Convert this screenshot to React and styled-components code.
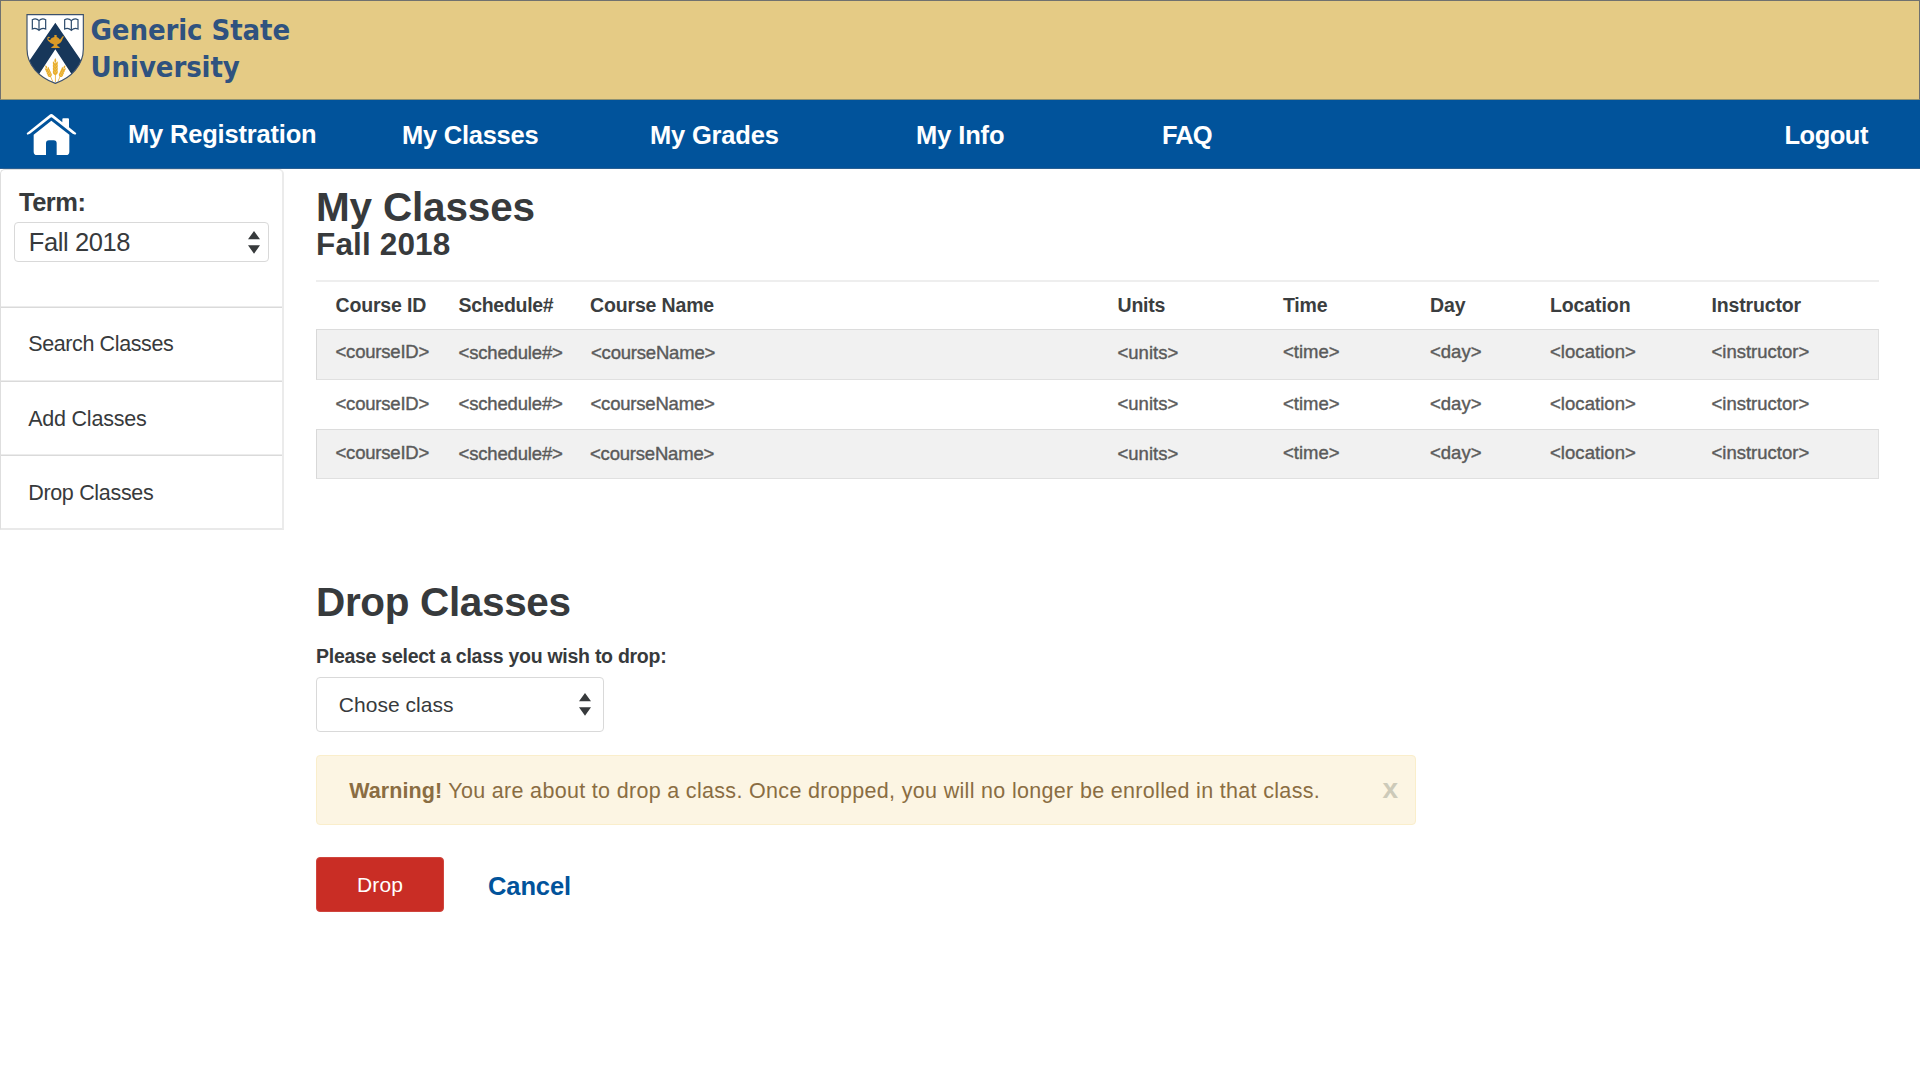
import React from 'react';
import styled, { createGlobalStyle, css } from 'styled-components';

const ink = '#373a3c';
const blue = '#01539b';

const GlobalStyle = createGlobalStyle`
  * { box-sizing: border-box; }
  body {
    margin: 0;
    background: #fff;
    color: ${ink};
    font-family: "Liberation Sans", Arial, sans-serif;
  }
  h1, h2, p { margin: 0; }
`;

const tracking = css`
  letter-spacing: ${(p) => p.$track || 0}px;
`;

/* ---------- header ---------- */

const Header = styled.header`
  height: 100px;
  padding: 12px 0 0 25px;
  display: flex;
  background: #e5cb85;
  border: 1px solid #70716f;
  border-bottom-color: #8f9272;
`;

const Crest = styled.svg`
  display: block;
  width: 60px;
  height: 72px;
  margin-right: 4.5px;
`;

const SchoolName = styled.div`
  margin-top: -1px;
  color: #2f527f;
  font: bold 29px/36.5px "DejaVu Sans Condensed", "DejaVu Sans", sans-serif;
  letter-spacing: -0.1px;
  white-space: pre-line;
`;

const Nav = styled.nav`
  height: 69px;
  display: grid;
  grid-template-columns: 128px 274px 248px 266px 246px 622.5px 1fr;
  background: ${blue};
  border-bottom: 1px solid #2a5f92;
`;

const HomeLink = styled.a`
  padding: 13px 0 0 26px;
`;

const HomeIcon = styled.svg`
  display: block;
  width: 51px;
  height: 44px;
`;

const NavLink = styled.a`
  padding-top: ${(p) => (p.$raised ? 0 : 1)}px;
  color: #fff;
  font-size: 25.5px;
  font-weight: bold;
  line-height: 68px;
  white-space: nowrap;
  ${tracking}
`;

/* ---------- sidebar ---------- */

const Body = styled.div`
  display: flex;
  align-items: flex-start;
`;

const Sidebar = styled.aside`
  width: 284px;
  border: 1px solid #dedede;
  border-right: 2px solid #ebebeb;
  border-bottom: 2px solid #e9e9e9;
  border-radius: 5px 5px 0 0;
`;

const TermBox = styled.div`
  height: 138px;
  padding: 17px 13px 0;
  border-bottom: 1px solid #dadada;
  box-shadow: inset 0 -1px #ececec;
`;

const TermLabel = styled.div`
  padding-left: 5px;
  height: 35px;
  font-size: 25.5px;
  font-weight: bold;
  line-height: 30px;
  ${tracking}
`;

const SideItem = styled.a`
  display: block;
  height: ${(p) => (p.$last ? 72 : 74)}px;
  padding: ${(p) => (p.$low ? 1 : 0)}px 0 0 27.2px;
  font-size: 21.5px;
  line-height: 72px;
  ${tracking}
  ${(p) =>
    !p.$last &&
    css`
      border-bottom: 1px solid #dadada;
      box-shadow: inset 0 -1px #ececec;
    `}
`;

/* ---------- select ---------- */

const SelectBox = styled.div`
  width: ${(p) => p.$w}px;
  height: ${(p) => p.$h}px;
  padding: 0 ${(p) => p.$padRight}px 0 ${(p) => p.$padLeft}px;
  display: flex;
  align-items: center;
  justify-content: space-between;
  border: 1px solid #d9d9d9;
  border-radius: 4px;
  font-size: ${(p) => p.$size}px;
  ${tracking}
`;

const Arrows = styled.svg`
  display: block;
  width: 12px;
  height: 23px;
`;

/* ---------- main ---------- */

const Main = styled.main`
  padding: 17px 0 0 32px;
`;

const Title = styled.h1`
  font-size: 40.5px;
  line-height: 43px;
  ${tracking}
`;

const Subtitle = styled.h2`
  height: 51px;
  font-size: 31.5px;
  line-height: 30px;
  ${tracking}
`;

const Table = styled.div`
  width: 1563px;
  height: 301px;
`;

const rowGrid = css`
  display: grid;
  grid-template-columns: 123px 131.5px 527.5px 165.5px 147px 120px 161.5px 1fr;
`;

const HeadRow = styled.div`
  ${rowGrid}
  height: 49px;
  padding-left: 19.5px;
  border-top: 2px solid #eee;
`;

const HeadCell = styled.div`
  color: #3b3e40;
  font-size: 19.5px;
  font-weight: bold;
  line-height: 47px;
  ${tracking}
`;

const Row = styled.div`
  ${rowGrid}
  height: ${(p) => p.$h}px;
  padding-left: 18.5px;
  border: 1px solid transparent;
  line-height: ${(p) => p.$line}px;
  ${(p) =>
    p.$shaded &&
    css`
      background: #f1f1f1;
      border-color: #dcdcdc #e0e0e0 #e0e0e0 #d8d8d8;
    `}
`;

const Cell = styled.div`
  padding: ${(p) => (p.$low ? 1 : 0)}px 0 0 ${(p) => p.$shift || 0}px;
  color: #5a5a5a;
  font-size: 18.5px;
  -webkit-text-stroke: 0.4px #5a5a5a;
  ${tracking}
`;

const Label = styled.p`
  margin: 20px 0 9px;
  font-size: 19.5px;
  font-weight: bold;
  line-height: 24px;
  ${tracking}
`;

const Alert = styled.div`
  width: 1100px;
  height: 70px;
  margin: 23px 0 32px;
  padding: 0 17px 0 32.2px;
  display: flex;
  justify-content: space-between;
  background: #fcf5e3;
  border: 1px solid #faeecb;
  border-radius: 4px;
  color: #8a6d42;
`;

const AlertText = styled.p`
  font-size: 21.5px;
  line-height: 70px;
  letter-spacing: 0.32px;
  white-space: nowrap;

  b { letter-spacing: 0.1px; }
`;

const CloseMark = styled.span`
  color: #cdcab9;
  font-size: 28px;
  font-weight: bold;
  line-height: 65px;
`;

const Actions = styled.div`
  display: flex;
  align-items: flex-start;
  gap: 44px;
`;

const DropButton = styled.button`
  width: 128px;
  height: 55px;
  padding: 0;
  background: #c92d25;
  border: 1px solid #d0453d;
  border-radius: 4px;
  color: #fff;
  font: 21px "Liberation Sans", Arial, sans-serif;
  letter-spacing: 0.1px;
`;

const CancelLink = styled.a`
  color: ${blue};
  font-size: 25.5px;
  font-weight: bold;
  line-height: 55px;
  padding-top: 1.5px;
  letter-spacing: -0.11px;
`;

/* ---------- drawings ---------- */

const Book = ({ x }) => (
  <g transform={`translate(${x} 57)`} fill="none" stroke="#2c4a6b" strokeWidth="3.6">
    <path d="M22 6C16 0 8 0 2 3V31C8 28 16 29 22 35C28 29 36 28 42 31V3C36 0 28 0 22 6ZM22 6V35" />
  </g>
);

const Wheat = ({ transform }) => (
  <g transform={transform} fill="#e8ae2c">
    <path d="M-1.2 0H1.2V58H-1.2Z" />
    <path d="M0-15C4-9 4-4 0 0C-4-4-4-9 0-15Z" />
    {[0, 9, 18, 27].map((y) => (
      <path
        key={y}
        d={`M0 ${y + 10}C-8 ${y + 7}-8 ${y + 1}-7 ${y - 5}C-2 ${y - 1} 0 ${y + 3} 0 ${y + 6}C0 ${y + 3} 2 ${y - 1} 7 ${y - 5}C8 ${y + 1} 8 ${y + 7} 0 ${y + 10}Z`}
      />
    ))}
  </g>
);

const Logo = () => (
  <Crest viewBox="78 40 180 216">
    <defs>
      <clipPath id="shield">
        <path d="M81 45H250V148C250 196 214 234 166 251C118 234 81 196 81 148Z" />
      </clipPath>
    </defs>
    <path d="M81 45H250V148C250 196 214 234 166 251C118 234 81 196 81 148Z" fill="#fff" />
    <g clipPath="url(#shield)">
      <path d="M166 69L250 192L215 224L166 149L117 224L82 192Z" fill="#17375a" />
    </g>
    <Book x={95} />
    <Book x={192} />
    <path
      d="M163 106H170V112C175 114 178 117 180 120C183 116 185 111 191 108C192 112 188 115 187 120C185 127 179 132 172 134V138L179 143V145H154V143L161 138V134C155 132 150 129 148 126C143 124 141 118 142 114C144 110 149 111 150 114C148 115 145 114 145 117C145 120 148 122 151 121C152 117 157 113 163 112Z"
      fill="#d99a27"
    />
    <Wheat transform="translate(166 190)" />
    <Wheat transform="translate(141 207) rotate(-24) scale(.85 .74)" />
    <Wheat transform="translate(191 207) rotate(24) scale(.85 .74)" />
    <path
      d="M81 45H250V148C250 196 214 234 166 251C118 234 81 196 81 148Z"
      fill="none"
      stroke="#3c506b"
      strokeWidth="3.5"
    />
  </Crest>
);

const Home = () => (
  <HomeIcon viewBox="78 339 153 132" fill="#fff">
    <path d="M154 342Q157 342 160 345L187 367V357Q187 355 190 355H204Q207 355 207 358V382L229 400L226 404L218 401L157 353Q154 351 151 353L90 401L82 404L80 400L148 345Q151 342 154 342Z" />
    <path d="M154 362L208 404V455Q208 465 198 465H170V430Q170 421 161 421H147Q138 421 138 430V465H111Q101 465 101 455V404Z" />
  </HomeIcon>
);

const Select = ({ children, ...box }) => (
  <SelectBox {...box}>
    <span>{children}</span>
    <Arrows viewBox="0 0 12 23" fill={ink}>
      <path d="M6 0L12 8.3H0ZM0 14.3H12L6 22.7Z" />
    </Arrows>
  </SelectBox>
);

/* ---------- data ---------- */

const navLinks = [
  ['My Registration', -0.19],
  ['My Classes', -0.25],
  ['My Grades', -0.18],
  ['My Info', -0.11],
  ['FAQ', -0.9],
  ['Logout', -0.5],
];

const columns = [
  { head: 'Course ID', track: -0.17, cell: '<courseID>', cellTrack: -0.2 },
  { head: 'Schedule#', track: -0.3, cell: '<schedule#>', cellTrack: -0.16, low: true },
  { head: 'Course Name', track: -0.15, cell: '<courseName>', cellTrack: -0.2, low: true },
  { head: 'Units', track: -0.2, cell: '<units>', cellTrack: 0, low: true },
  { head: 'Time', track: -0.2, cell: '<time>', cellTrack: 0 },
  { head: 'Day', track: -0.1, cell: '<day>', cellTrack: 0 },
  { head: 'Location', track: -0.1, cell: '<location>', cellTrack: 0.05 },
  { head: 'Instructor', track: -0.15, cell: '<instructor>', cellTrack: 0 },
];

const rows = [
  { h: 51, line: 43, shaded: true, stagger: true, shift: 1 },
  { h: 49, line: 46, shaded: false, stagger: false, shift: 0.5 },
  { h: 49.5, line: 45, shaded: true, stagger: true, shift: 0 },
];

export default function App() {
  return (
    <>
      <GlobalStyle />
      <Header>
        <Logo />
        <SchoolName>{'Generic State\nUniversity'}</SchoolName>
      </Header>
      <Nav>
        <HomeLink>
          <Home />
        </HomeLink>
        {navLinks.map(([text, track], i) => (
          <NavLink key={text} $track={track} $raised={i === 0}>
            {text}
          </NavLink>
        ))}
      </Nav>
      <Body>
        <Sidebar>
          <TermBox>
            <TermLabel $track={-0.5}>Term:</TermLabel>
            <Select $w={255} $h={40} $padLeft={13.8} $padRight={8} $size={25.5} $track={-0.4}>
              Fall 2018
            </Select>
          </TermBox>
          <SideItem $track={-0.38}>Search Classes</SideItem>
          <SideItem $track={-0.22} $low>
            Add Classes
          </SideItem>
          <SideItem $track={-0.32} $low $last>
            Drop Classes
          </SideItem>
        </Sidebar>
        <Main>
          <Title $track={-0.18}>My Classes</Title>
          <Subtitle $track={0.15}>Fall 2018</Subtitle>
          <Table>
            <HeadRow>
              {columns.map((c) => (
                <HeadCell key={c.head} $track={c.track}>
                  {c.head}
                </HeadCell>
              ))}
            </HeadRow>
            {rows.map((r, i) => (
              <Row key={i} $h={r.h} $line={r.line} $shaded={r.shaded}>
                {columns.map((c, n) => (
                  <Cell
                    key={c.cell}
                    $track={c.cellTrack}
                    $low={r.stagger && c.low}
                    $shift={n === 2 ? r.shift : 0}
                  >
                    {c.cell}
                  </Cell>
                ))}
              </Row>
            ))}
          </Table>
          <Title $track={-0.35}>Drop Classes</Title>
          <Label $track={-0.27}>Please select a class you wish to drop:</Label>
          <Select $w={288} $h={55} $padLeft={21.8} $padRight={12} $size={21} $track={0.03}>
            Chose class
          </Select>
          <Alert>
            <AlertText>
              <b>Warning!</b> You are about to drop a class. Once dropped, you will no longer be
              enrolled in that class.
            </AlertText>
            <CloseMark>x</CloseMark>
          </Alert>
          <Actions>
            <DropButton>Drop</DropButton>
            <CancelLink>Cancel</CancelLink>
          </Actions>
        </Main>
      </Body>
    </>
  );
}
